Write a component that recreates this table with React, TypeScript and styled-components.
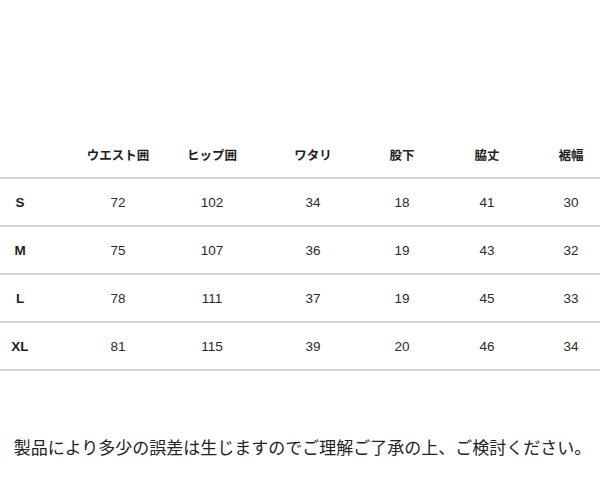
import styled, { createGlobalStyle } from "styled-components";

const GlobalStyle = createGlobalStyle`
  html, body {
    margin: 0;
    padding: 0;
    background: #ffffff;
  }
  body {
    font-family: "Liberation Sans", "Noto Sans CJK JP", sans-serif;
    color: #222222;
  }
`;

type Column = { label: string; center: number; width: number };

const columns: Column[] = [
  { label: "", center: 20, width: 40 },
  { label: "ウエスト囲", center: 118, width: 72 },
  { label: "ヒップ囲", center: 212, width: 60 },
  { label: "ワタリ", center: 313, width: 56 },
  { label: "股下", center: 402, width: 56 },
  { label: "脇丈", center: 487, width: 56 },
  { label: "裾幅", center: 571, width: 56 },
];

const rows = [
  { size: "S", values: [72, 102, 34, 18, 41, 30] },
  { size: "M", values: [75, 107, 36, 19, 43, 32] },
  { size: "L", values: [78, 111, 37, 19, 45, 33] },
  { size: "XL", values: [81, 115, 39, 20, 46, 34] },
];

// spacer track before each column, so every cell sits on its own center
const template = (() => {
  let end = 0;
  const parts: string[] = [];
  columns.forEach((c) => {
    const start = c.center - c.width / 2;
    parts.push(`${Math.max(0, start - end)}px`, `${c.width}px`);
    end = start + c.width;
  });
  parts.push("1fr");
  return parts.join(" ");
})();

const App = () => {
  return (
    <Page>
      <GlobalStyle />
      <Table>
        <HeaderRow template={template}>
          {columns.map((c, i) => (
            <HeadCell key={i} col={i * 2 + 2}>
              {c.label}
            </HeadCell>
          ))}
        </HeaderRow>
        {rows.map((r) => (
          <Row key={r.size} template={template}>
            <SizeCell col={2}>{r.size}</SizeCell>
            {r.values.map((v, i) => (
              <Cell key={i} col={(i + 1) * 2 + 2}>
                {v}
              </Cell>
            ))}
          </Row>
        ))}
      </Table>
      <Note>製品により多少の誤差は生じますのでご理解ご了承の上、ご検討ください。</Note>
    </Page>
  );
};

const Page = styled.div`
  width: 600px;
  height: 500px;
  padding-top: 132px;
  box-sizing: border-box;
`;

const Table = styled.div`
  display: flex;
  flex-direction: column;
`;

const HeaderRow = styled.div<{ template: string }>`
  display: grid;
  grid-template-columns: ${(p) => p.template};
  align-items: center;
  height: 45px;
  border-bottom: 2px solid #d6d6d6;
`;

const Row = styled.div<{ template: string }>`
  display: grid;
  grid-template-columns: ${(p) => p.template};
  align-items: center;
  box-sizing: border-box;
  height: 48px;
  padding-top: 1px;
  border-bottom: 2px solid #d6d6d6;
`;

const Cell = styled.div<{ col: number }>`
  grid-column: ${(p) => p.col};
  grid-row: 1;
  display: flex;
  justify-content: center;
  white-space: nowrap;
  font-family: "Liberation Sans", "Noto Sans CJK JP", sans-serif;
  font-size: 13.5px;
  color: #2a2a2a;
`;

const HeadCell = styled(Cell)`
  font-family: "Noto Sans CJK JP", sans-serif;
  font-weight: 700;
  font-size: 12.5px;
  color: #1e1e1e;
`;

const SizeCell = styled(Cell)`
  font-weight: 700;
  color: #1e1e1e;
`;

const Note = styled.p`
  margin: 64px 0 0;
  padding-left: 5px;
  text-align: center;
  font-family: "Noto Sans CJK JP", sans-serif;
  font-size: 17px;
  line-height: 24px;
  color: #222222;
  white-space: nowrap;
`;

export default App;
